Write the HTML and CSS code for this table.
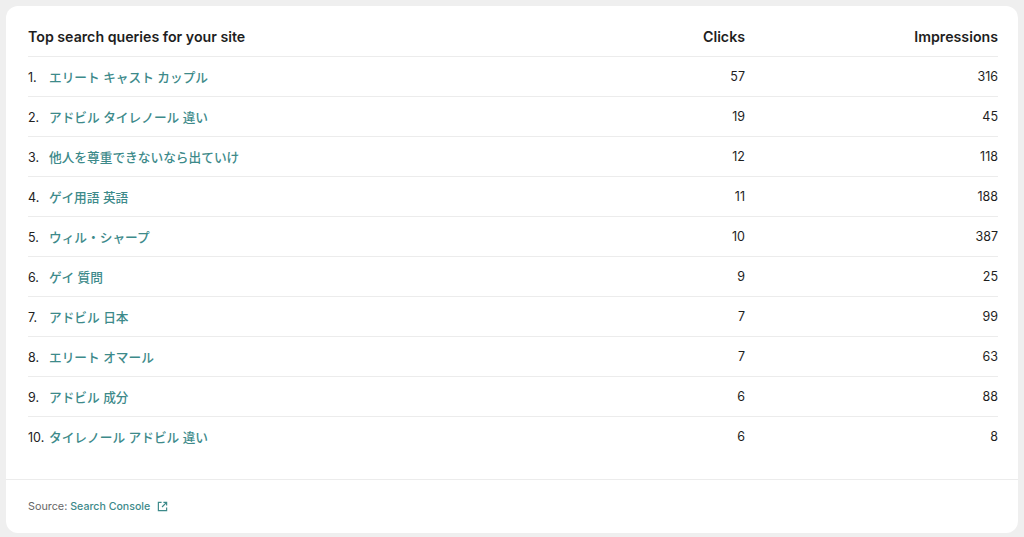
FILE: index.html
```html
<!DOCTYPE html>
<html lang="en">
<head>
<meta charset="utf-8">
<link rel="stylesheet" href="styles.css">
</head>
<body>
<div class="card">
  <div class="table">
    <div class="row head">
      <div class="c-query">Top search queries for your site</div>
      <div class="c-clicks">Clicks</div>
      <div class="c-imp">Impressions</div>
    </div>
    <div class="row"><div class="c-query"><span class="num">1.</span><a class="q">エリート キャスト カップル</a></div><div class="c-clicks">57</div><div class="c-imp">316</div></div>
    <div class="row"><div class="c-query"><span class="num">2.</span><a class="q">アドビル タイレノール 違い</a></div><div class="c-clicks">19</div><div class="c-imp">45</div></div>
    <div class="row"><div class="c-query"><span class="num">3.</span><a class="q">他人を尊重できないなら出ていけ</a></div><div class="c-clicks">12</div><div class="c-imp">118</div></div>
    <div class="row"><div class="c-query"><span class="num">4.</span><a class="q">ゲイ用語 英語</a></div><div class="c-clicks">11</div><div class="c-imp">188</div></div>
    <div class="row"><div class="c-query"><span class="num">5.</span><a class="q">ウィル・シャープ</a></div><div class="c-clicks">10</div><div class="c-imp">387</div></div>
    <div class="row"><div class="c-query"><span class="num">6.</span><a class="q">ゲイ 質問</a></div><div class="c-clicks">9</div><div class="c-imp">25</div></div>
    <div class="row"><div class="c-query"><span class="num">7.</span><a class="q">アドビル 日本</a></div><div class="c-clicks">7</div><div class="c-imp">99</div></div>
    <div class="row"><div class="c-query"><span class="num">8.</span><a class="q">エリート オマール</a></div><div class="c-clicks">7</div><div class="c-imp">63</div></div>
    <div class="row"><div class="c-query"><span class="num">9.</span><a class="q">アドビル 成分</a></div><div class="c-clicks">6</div><div class="c-imp">88</div></div>
    <div class="row last"><div class="c-query"><span class="num">10.</span><a class="q">タイレノール アドビル 違い</a></div><div class="c-clicks">6</div><div class="c-imp">8</div></div>
  </div>
  <div class="footer">
    <span class="src">Source:</span>
    <a class="src-link">Search Console</a>
    <svg class="ext" width="11" height="11" viewBox="0 0 12 12" fill="none" stroke="#3d8a8a" stroke-width="1.3">
      <path d="M5 1.5H1.5v9h9V7"/>
      <path d="M7 1.5h3.5V5"/>
      <path d="M10.5 1.5L5.5 6.5"/>
    </svg>
  </div>
</div>
</body>
</html>
```
FILE: styles.css
```css
* { box-sizing: border-box; }
html, body { margin: 0; padding: 0; }
body {
  background: #efefef;
  font-family: Inter, "Noto Sans CJK JP", sans-serif;
  color: #1e1e1e;
  padding: 6px 6px 4px 6px;
}
.card {
  background: #fff;
  border-radius: 12px;
  height: 527px;
  display: flex;
  flex-direction: column;
}
.table {
  padding: 0 20px 0 22px;
  height: 473px;
}
.row {
  display: grid;
  grid-template-columns: 1fr 150px 253px;
  align-items: center;
  height: 40px;
  border-top: 1px solid #ececec;
  font-size: 12.5px;
}
.row.head {
  border-top: none;
  height: 50px;
  padding-top: 10px;
  font-size: 14.2px;
  font-weight: 600;
  color: #1e1e1e;
}
.c-clicks, .c-imp { text-align: right; }
.num {
  display: inline-block;
  width: 21px;
  color: #222;
}
.q {
  color: #3d8a8a;
  font-weight: 500;
  font-size: 12.7px;
}
.footer {
  border-top: 1px solid #ececec;
  flex: 1;
  display: flex;
  align-items: center;
  padding: 0 22px;
  font-size: 10.8px;
  gap: 3px;
}
.src { color: #666; }
.src-link { color: #3d8a8a; font-weight: 500; font-size: 10.6px; }
.ext { margin-left: 4px; }
```
